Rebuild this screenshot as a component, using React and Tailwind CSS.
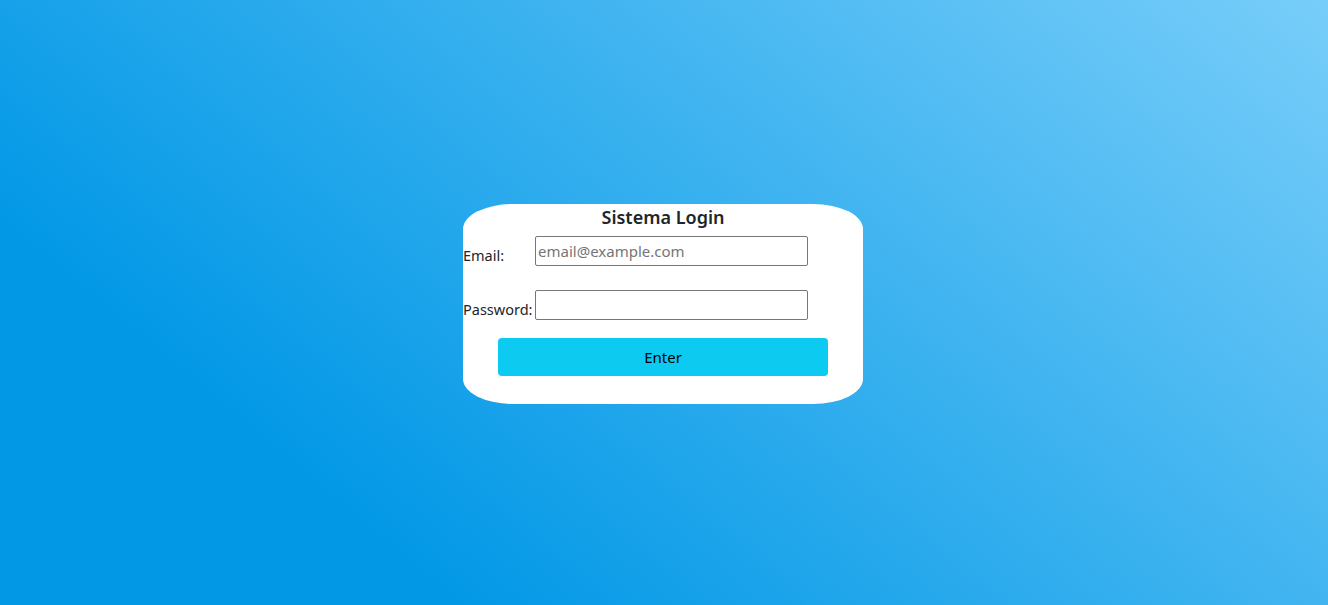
export default function App() {
  const font = { fontFamily: '"Noto Sans", "Open Sans", sans-serif' };

  return (
    <div
      className="min-h-screen flex items-center justify-center bg-[linear-gradient(40deg,#0298e6_22%,#82d2fb_107%)]"
      style={font}
    >
      <div className="mt-[3px] mr-[2px] w-[400px] h-[200px] bg-white rounded-[12.5%] flex flex-col text-[#212529]">
        <h2 className="text-center text-[18px] leading-[26px] font-semibold">
          Sistema Login
        </h2>
        <form onSubmit={(e) => e.preventDefault()} className="flex flex-col">
          <div className="mt-[6px] flex items-end">
            <label htmlFor="email" className="w-[72px] text-[14.5px] leading-[21px]">
              Email:
            </label>
            <input
              id="email"
              type="email"
              placeholder="email@example.com"
              className="w-[273px] h-[30px] border border-[#767676] rounded-[2px] px-[2px] text-[15px] placeholder:text-[#757575] outline-none"
            />
          </div>
          <div className="mt-6 flex items-end">
            <label htmlFor="password" className="w-[72px] text-[14.5px] leading-[21px]">
              Password:
            </label>
            <input
              id="password"
              type="password"
              className="w-[273px] h-[30px] border border-[#767676] rounded-[2px] px-[2px] text-[15px] outline-none"
            />
          </div>
          <button
            type="submit"
            className="mt-[18px] ml-[35px] w-[330px] h-[38px] rounded-[4px] bg-[#0dcaf0] text-black text-[15px]"
          >
            Enter
          </button>
        </form>
      </div>
    </div>
  );
}
